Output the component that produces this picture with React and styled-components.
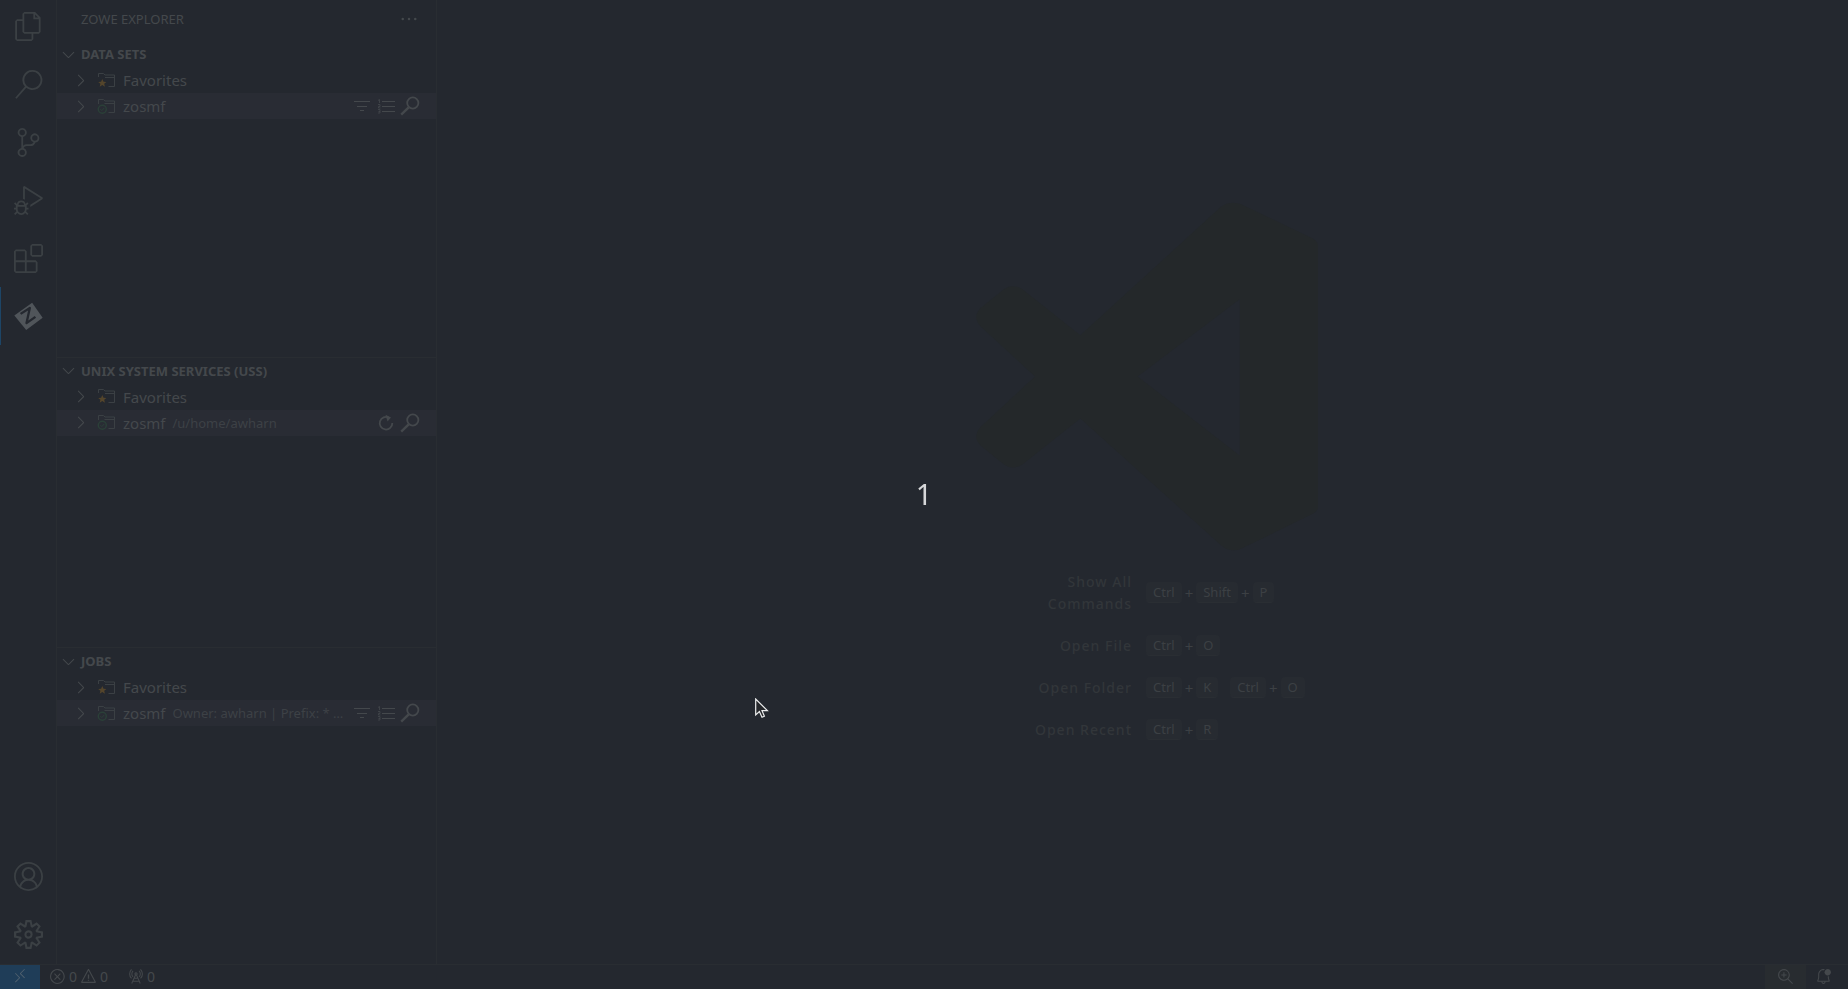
import React from "react";
import styled, { createGlobalStyle } from "styled-components";
import {
  VscFiles, VscSearch, VscSourceControl, VscDebugAlt, VscExtensions, VscAccount,
  VscSettingsGear, VscChevronDown, VscChevronRight, VscEllipsis,
  VscRemote, VscError, VscWarning, VscRadioTower, VscZoomIn, VscBellDot,
} from "react-icons/vsc";

const c = {
  bg: "#24282f",
  border: "#292d32",
  selected: "#292c34",
  text: "#44484c",
  muted: "#3d4146",
  icon: "#3b4044",
  faint: "#32363a",
  key: "#272b31",
};

const Global = createGlobalStyle`
  * { box-sizing: border-box; }
  body {
    margin: 0;
    background: ${c.bg};
    color: ${c.text};
    font-family: "Noto Sans", "Open Sans", sans-serif;
  }
  button {
    font: inherit;
    color: inherit;
    background: none;
    border: 0;
    padding: 0;
    display: flex;
    align-items: center;
  }
  svg { display: block; flex: none; }
`;

const Window = styled.div`
  height: 100vh;
  display: flex;
  flex-direction: column;
  overflow: hidden;
`;
const Workbench = styled.div`
  flex: 1;
  min-height: 0;
  display: flex;
`;
const ActivityBar = styled.nav`
  width: 57px;
  border-right: 1px solid ${c.border};
  display: flex;
  flex-direction: column;
  justify-content: space-between;
`;
const ActivityGroup = styled.div`
  display: flex;
  flex-direction: column;
  margin: -3px 0 1px;
`;
const ActivityButton = styled.button`
  && {
    height: 58px;
    justify-content: center;
    color: ${(p) => (p.$active ? "#50555a" : c.icon)};
    box-shadow: ${(p) => (p.$active ? "inset 1px 0 #1d4566" : "none")};
  }
`;
const SideBar = styled.aside`
  width: 380px;
  border-right: 1px solid ${c.border};
  display: flex;
  flex-direction: column;
`;
const SideTitle = styled.header`
  height: 40px;
  flex: none;
  padding: 0 17px 2px 24px;
  display: flex;
  align-items: center;
  justify-content: space-between;
  color: ${c.text};
`;
const Title = styled.h1`
  margin: 0;
  font-size: 13px;
  font-weight: 400;
`;
const Section = styled.section`
  flex: ${(p) => p.$grow} 1 0;
  min-height: 0;
  border-top: 1px solid ${(p) => (p.$first ? "transparent" : c.border)};
`;
const SectionHeader = styled.button`
  && {
    width: 100%;
    height: 26px;
    padding-left: 2px;
    gap: 3px;
    font-size: 13px;
    font-weight: 700;
  }
`;
const Row = styled.div`
  height: 26px;
  padding: 0 16px 0 14px;
  display: flex;
  align-items: center;
  gap: 4px;
  font-size: 15px;
  background: ${(p) => (p.$selected ? c.selected : "transparent")};
`;
const RowMain = styled.button`
  && {
    flex: 1;
    min-width: 0;
    gap: 7px;
    white-space: nowrap;
  }
`;
const Description = styled.span`
  font-size: 13px;
  color: ${c.muted};
`;
const Editor = styled.main`
  flex: 1;
  display: flex;
  flex-direction: column;
  align-items: center;
  justify-content: center;
  gap: 20px;
  padding-bottom: 22px;
`;
const Shortcuts = styled.dl`
  margin: 0;
  display: grid;
  grid-template-columns: 151px 158px;
  column-gap: 14px;
  row-gap: 20px;
  align-items: center;
`;
const Label = styled.dt`
  justify-self: end;
  max-width: 120px;
  text-align: right;
  font-size: 14px;
  font-weight: 500;
  line-height: 22px;
  letter-spacing: 1px;
  color: ${c.faint};
`;
const Keys = styled.dd`
  margin: 0;
  display: flex;
  align-items: center;
  gap: 12px;
  white-space: nowrap;
`;
const Chord = styled.span`
  display: flex;
  align-items: center;
  gap: 3px;
  font-size: 13px;
  color: #3c4044;
`;
const Plus = styled.span`
  font-size: 15px;
  line-height: 20px;
`;
const Key = styled.kbd`
  font: inherit;
  height: 21px;
  line-height: 20px;
  padding: 0 7px;
  border-radius: 4px;
  background: ${c.key};
  border-bottom: 1px solid #2a2e33;
`;
const StatusBar = styled.footer`
  height: 25px;
  border-top: 1px solid ${c.border};
  display: flex;
  justify-content: space-between;
  font-size: 14px;
`;
const StatusGroup = styled.div`
  display: flex;
  gap: ${(p) => p.$gap}px;
`;
const StatusItem = styled.button`
  && {
    gap: ${(p) => p.$gap ?? 4}px;
    padding: 0 ${(p) => p.$right ?? p.$pad ?? 0}px 2px ${(p) => p.$pad ?? 0}px;
    background: ${(p) => p.$fill || "transparent"};
    color: ${(p) => p.$color || c.text};
  }
`;
const Countdown = styled.div`
  position: fixed;
  inset: 0;
  display: grid;
  place-items: center;
  padding-bottom: 2px;
  font-size: 29px;
  line-height: 40px;
  color: #d6d7d9;
  pointer-events: none;
`;
const Pointer = styled.svg`
  position: fixed;
  left: 755px;
  top: 698px;
  pointer-events: none;
`;

const ZoweIcon = () => (
  <svg width="29" height="29" viewBox="42 395 88 88" aria-hidden="true">
    <path d="M43 436 97 397 129 443 79 480Z" fill="currentColor" />
    <path d="M62 431 90 413 80 459 107 440" fill="none" stroke={c.bg} strokeWidth="7" strokeLinejoin="round" />
  </svg>
);

const FolderIcon = ({ badge }) => (
  <svg width="19" height="19" viewBox="0 0 19 19" fill="none" aria-hidden="true">
    <path
      d={badge === "star"
        ? "M1.5 6V2.5H6.5L8 4H17.5V15.5H11.5M8 6.5H17.5"
        : "M1.5 7V2.5H6.5L8 4H17.5V15.5H11.5M7.5 6.5H17.5"}
      stroke={c.icon}
    />
    {badge === "star" ? (
      <path d="M5.3 8 6.5 10.7 9.4 10.9 7.2 12.8 7.9 15.7 5.3 14.1 2.7 15.7 3.4 12.8 1.2 10.9 4.1 10.7Z" fill="#54452b" />
    ) : (
      <g stroke="#2b4038">
        <circle cx="5.3" cy="12.2" r="4" strokeWidth="1.4" />
        <path d="M3.4 12.2 4.8 13.6 7.3 10.9" />
      </g>
    )}
  </svg>
);

const FilterIcon = () => (
  <svg width="20" height="20" viewBox="0 0 20 20" fill="none" stroke={c.text} aria-hidden="true">
    <path d="M2 5.5H18M5 10.5H15M8 14.5H12" />
  </svg>
);
const SortIcon = () => (
  <svg width="20" height="20" viewBox="0 0 20 20" fill="none" stroke={c.text} aria-hidden="true">
    <path d="M6 5.5H19M6 10.5H19M6 15.5H19" />
    <path d="M2 4.5 3.5 3.5V7M2 8.5H4V10.5H2.5V12H4.5M2 13.5H4V17H2M2.5 15.5H4" strokeWidth=".8" />
  </svg>
);
const RefreshIcon = () => (
  <svg width="20" height="20" viewBox="0 0 20 20" fill="none" stroke={c.text} strokeWidth="1.8" aria-hidden="true">
    <path d="M13 4.7A6.3 6.3 0 1 0 16.3 10" />
    <path d="M9.5 1.7 15 4.4 11.5 8.4Z" fill={c.text} stroke="none" />
  </svg>
);
const FindIcon = () => (
  <svg width="20" height="20" viewBox="0 0 20 20" fill="none" stroke={c.text} aria-hidden="true">
    <circle cx="12.8" cy="7" r="5.6" strokeWidth="1.8" />
    <path d="M8.7 11.3 1.2 18.6" strokeWidth="2.4" />
  </svg>
);

const actions = {
  filter: ["Filter", <FilterIcon />],
  sort: ["Sort", <SortIcon />],
  refresh: ["Refresh", <RefreshIcon />],
  find: ["Search", <FindIcon />],
};

const sections = [
  { name: "DATA SETS", grow: 317, tools: ["filter", "sort", "find"] },
  { name: "UNIX SYSTEM SERVICES (USS)", grow: 290, detail: "/u/home/awharn", tools: ["refresh", "find"] },
  { name: "JOBS", grow: 317, detail: "Owner: awharn | Prefix: * …", tools: ["filter", "sort", "find"] },
];

const shortcuts = [
  ["Show All Commands", [["Ctrl", "Shift", "P"]]],
  ["Open File", [["Ctrl", "O"]]],
  ["Open Folder", [["Ctrl", "K"], ["Ctrl", "O"]]],
  ["Open Recent", [["Ctrl", "R"]]],
];

const activities = [
  ["Explorer", VscFiles], ["Search", VscSearch], ["Source Control", VscSourceControl],
  ["Run and Debug", VscDebugAlt], ["Extensions", VscExtensions],
];

export default function App() {
  return (
    <Window>
      <Global />
      <Workbench>
        <ActivityBar>
          <ActivityGroup>
            {activities.map(([name, Icon]) => (
              <ActivityButton key={name} aria-label={name}><Icon size={29} /></ActivityButton>
            ))}
            <ActivityButton $active aria-label="Zowe Explorer"><ZoweIcon /></ActivityButton>
          </ActivityGroup>
          <ActivityGroup>
            <ActivityButton aria-label="Accounts"><VscAccount size={29} /></ActivityButton>
            <ActivityButton aria-label="Manage"><VscSettingsGear size={29} /></ActivityButton>
          </ActivityGroup>
        </ActivityBar>

        <SideBar>
          <SideTitle>
            <Title>ZOWE EXPLORER</Title>
            <button aria-label="More actions"><VscEllipsis size={20} /></button>
          </SideTitle>
          {sections.map((s, i) => (
            <Section key={s.name} $grow={s.grow} $first={i === 0}>
              <SectionHeader><VscChevronDown size={19} />{s.name}</SectionHeader>
              <Row>
                <RowMain><VscChevronRight size={19} /><FolderIcon badge="star" />Favorites</RowMain>
              </Row>
              <Row $selected>
                <RowMain>
                  <VscChevronRight size={19} /><FolderIcon badge="check" />zosmf
                  {s.detail && <Description>{s.detail}</Description>}
                </RowMain>
                {s.tools.map((t) => (
                  <button key={t} aria-label={actions[t][0]}>{actions[t][1]}</button>
                ))}
              </Row>
            </Section>
          ))}
        </SideBar>

        <Editor>
          <svg width="350" height="349" viewBox="21 66 1050 1046" aria-hidden="true">
            <path
              fill="#24282a"
              fillRule="evenodd"
              d="M780 80Q808 60 840 72L1055 175Q1072 184 1072 205V975Q1072 992 1055 1001L840 1106Q808 1119 780 1095L358 715 185 852Q155 872 128 852L58 795Q34 770 58 741L222 589 58 438Q34 410 58 384L128 328Q155 308 185 328L358 465ZM836 357 530 589 836 826Z"
            />
          </svg>
          <Shortcuts>
            {shortcuts.map(([label, chords]) => (
              <React.Fragment key={label}>
                <Label>{label}</Label>
                <Keys>
                  {chords.map((keys, i) => (
                    <Chord key={i}>
                      {keys.map((k, j) => (
                        <React.Fragment key={k}>
                          {j > 0 && <Plus>+</Plus>}
                          <Key>{k}</Key>
                        </React.Fragment>
                      ))}
                    </Chord>
                  ))}
                </Keys>
              </React.Fragment>
            ))}
          </Shortcuts>
        </Editor>
      </Workbench>

      <StatusBar>
        <StatusGroup $gap={9}>
          <StatusItem $pad={12} $fill="#1f3d58" $color="#50606e" aria-label="Open a remote window"><VscRemote size={16} /></StatusItem>
          <StatusItem $gap={3} aria-label="Problems">
            <VscError size={17} />0<VscWarning size={17} />0
          </StatusItem>
          <StatusItem $gap={3} $pad={10} aria-label="Forwarded ports"><VscRadioTower size={17} />0</StatusItem>
        </StatusGroup>
        <StatusGroup $gap={0}>
          <StatusItem $pad={12} $fill="#282c30" aria-label="Zoom in"><VscZoomIn size={17} /></StatusItem>
          <StatusItem $pad={9} $right={16} aria-label="Notifications"><VscBellDot size={17} /></StatusItem>
        </StatusGroup>
      </StatusBar>

      <Countdown>1</Countdown>
      <Pointer width="14" height="21" viewBox="0 0 14 21" aria-hidden="true">
        <path d="M.7 1V17L4.4 13.6 7 19.3 9.4 18.2 7 12.7H12.4Z" fill="#25272b" stroke="#eceded" strokeWidth="1.2" />
      </Pointer>
    </Window>
  );
}
